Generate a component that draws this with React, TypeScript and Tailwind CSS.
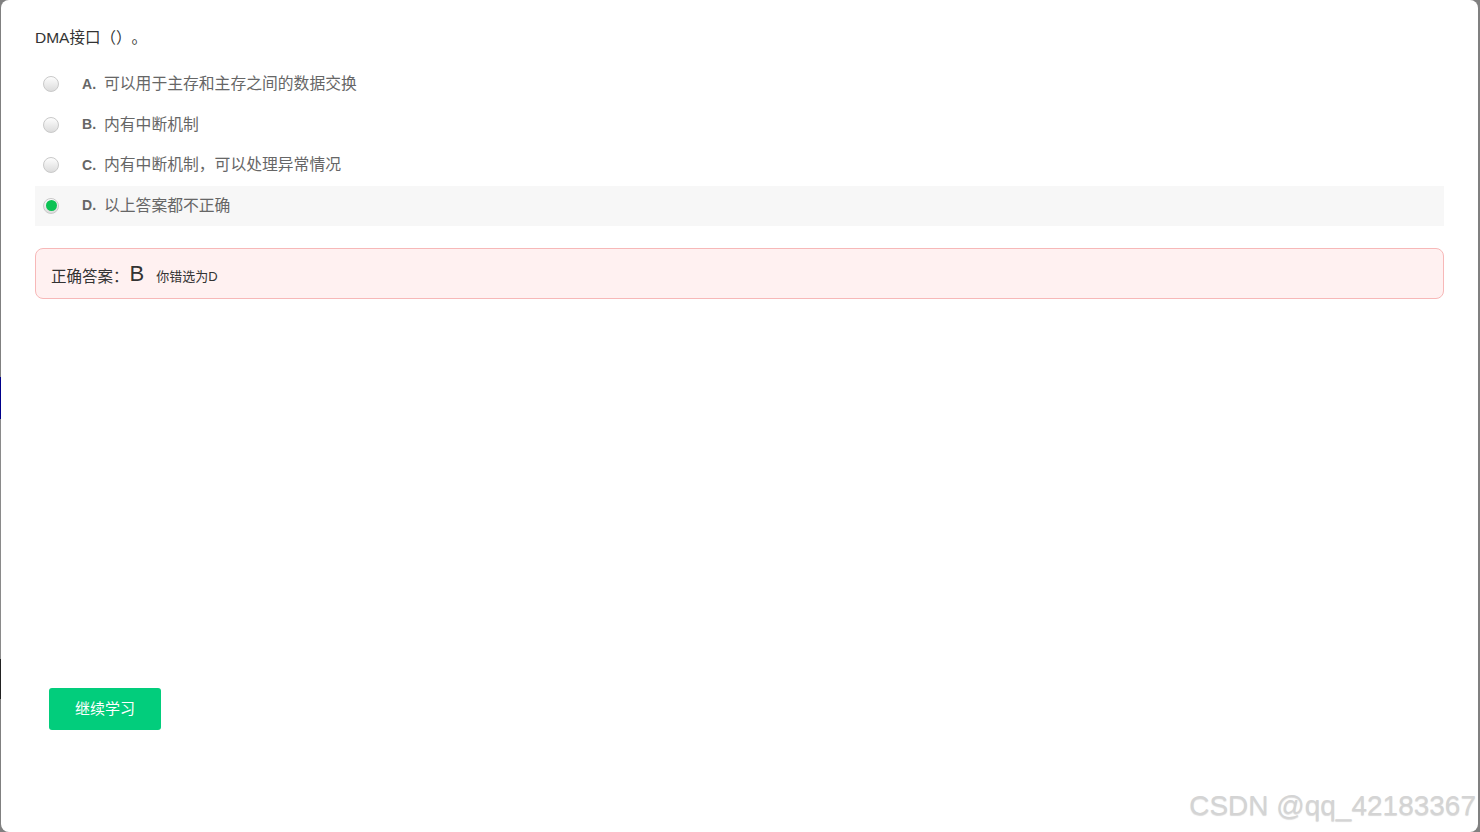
const options = [
  { key: "A", text: "可以用于主存和主存之间的数据交换" },
  { key: "B", text: "内有中断机制" },
  { key: "C", text: "内有中断机制，可以处理异常情况" },
  { key: "D", text: "以上答案都不正确", selected: true },
];

const font = "font-['Liberation_Sans','Noto_Sans_CJK_SC',sans-serif]";

function Radio({ checked }: { checked?: boolean }) {
  return (
    <span className="flex h-[16px] w-[16px] items-center justify-center rounded-full border border-[#c9c9c9] bg-gradient-to-b from-[#fdfdfd] to-[#dcdcdc]">
      {checked && <span className="h-[11px] w-[11px] rounded-full bg-[#0cc254]" />}
    </span>
  );
}

export default function App() {
  return (
    <div className={`flex h-[832px] w-[1480px] bg-[#808080] ${font}`}>
      {/* left edge of the page behind the dialog */}
      <div className="flex w-[1px] flex-col">
        <div className="h-[377px] bg-[#808080]" />
        <div className="h-[42px] bg-[#00008b]" />
        <div className="h-[240px] bg-[#8a8a8a]" />
        <div className="h-[40px] bg-[#222]" />
        <div className="flex-1 bg-[#808080]" />
      </div>

      <div className="relative flex-1 rounded-lg bg-white mr-[2px]">
        <div className="px-[34px] pt-[28px]">
          <p className="text-[15.5px] leading-[20px] text-[#333] [text-spacing-trim:space-all]">DMA接口（）。</p>

          <div className="mt-[16px] flex flex-col">
            {options.map((o) => (
              <div
                key={o.key}
                className={`flex h-[40.5px] items-center ${o.selected ? "bg-[#f7f7f7]" : ""}`}
              >
                <span className="ml-[8px]">
                  <Radio checked={o.selected} />
                </span>
                <span className="ml-[23px] text-[14px] font-bold text-[#666]">{o.key}.</span>
                <span className="ml-[8px] text-[15.8px] text-[#666]">{o.text}</span>
              </div>
            ))}
          </div>

          <div className="mt-[22px] flex h-[51px] items-center rounded-lg border border-[#f7b8b8] bg-[#fff1f1] px-[15px] pt-[6px]">
            <span className="text-[15.5px] text-[#333]">正确答案：</span>
            <span className="ml-[1px] mb-[5px] text-[22px] leading-none text-[#333]">B</span>
            <span className="ml-[12px] text-[13px] text-[#333]">你错选为D</span>
          </div>

          <button className="ml-[14px] mt-[389px] flex h-[42px] w-[112px] items-center justify-center rounded-[3px] bg-[#02cd7c] text-[15px] text-white">
            继续学习
          </button>
        </div>

        <span className="absolute bottom-[12px] right-[2px] text-[28px] leading-none text-[#d4d4d4] [text-shadow:0_1px_1px_rgba(0,0,0,0.15)]">
          CSDN @qq_42183367
        </span>
      </div>
    </div>
  );
}
